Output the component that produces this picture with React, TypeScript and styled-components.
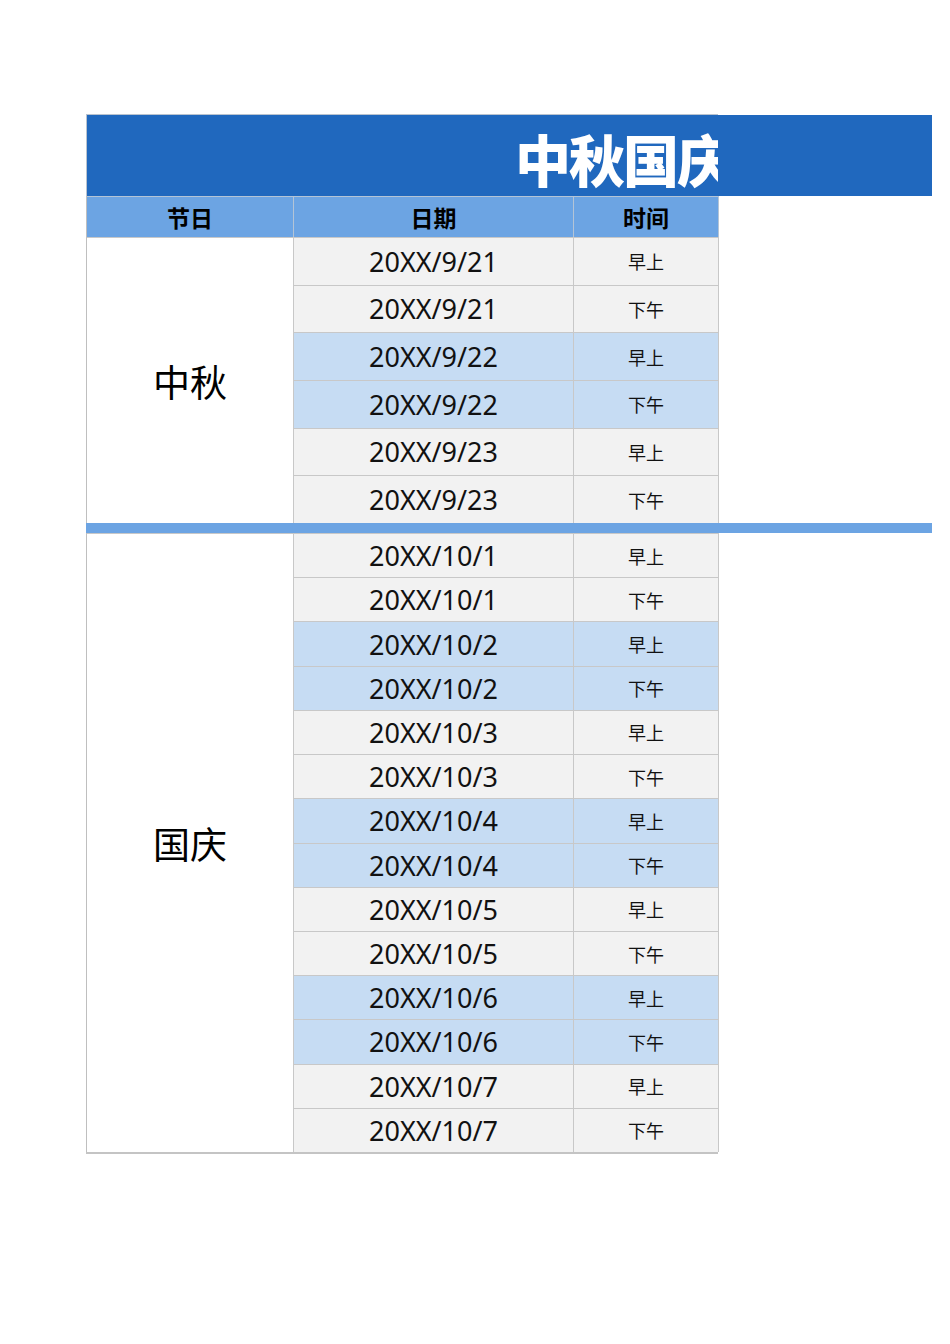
import React from "react";
import styled, { createGlobalStyle } from "styled-components";

const Global = createGlobalStyle`
  html, body { margin: 0; padding: 0; background: #fff; }
  body { font-family: "Noto Sans", "Noto Sans CJK SC", sans-serif; color: #000; }
`;

const Page = styled.div`
  padding: 114px 0 0 86px;
  width: 950px;
  box-sizing: border-box;
`;

const TitleRow = styled.div`
  display: flex;
  align-items: flex-start;
`;

const TitleCell = styled.div`
  width: 632px;
  height: 82px;
  box-sizing: border-box;
  border-top: 1px solid #b9c3cf;
  border-left: 1px solid #b9c3cf;
  background: #2068be;
  overflow: hidden;
  display: flex;
  align-items: center;
  padding-left: 428px;
  white-space: nowrap;
`;

const TitleText = styled.span`
  font-family: "Noto Sans CJK SC", sans-serif;
  font-weight: 900;
  font-size: 56px;
  color: #fff;
  letter-spacing: -2px;
  line-height: 1;
  margin-top: 4px;
`;

const TitleExtension = styled.div`
  width: 214px;
  height: 82px;
  background: #2068be;
  border-top: 1px solid #fff;
  box-sizing: border-box;
`;

const Columns = "207px 280px 145px";

const HeaderRow = styled.div`
  display: grid;
  grid-template-columns: ${Columns};
  width: 632px;
  height: 41px;
  background: #6ca4e3;
  box-sizing: border-box;
  border-left: 1px solid #bfbfbf;
`;

const HeaderCell = styled.div`
  display: flex;
  align-items: center;
  justify-content: center;
  font-family: "Noto Sans CJK SC", sans-serif;
  font-weight: 700;
  font-size: 23px;
  border-right: 1px solid #b4c4d6;
  border-top: 1px solid #b4c4d6;
`;

const Group = styled.div<{ $rows: number; $height: number }>`
  display: grid;
  grid-template-columns: ${Columns};
  grid-template-rows: repeat(${(p) => p.$rows}, 1fr);
  width: 632px;
  height: ${(p) => p.$height}px;
  box-sizing: border-box;
  border-left: 1px solid #bfbfbf;
`;

const GroupCell = styled.div<{ $rows: number }>`
  grid-column: 1;
  grid-row: 1 / span ${(p) => p.$rows};
  background: #fff;
  border-right: 1px solid #c8c8c8;
  border-top: 1px solid #c8c8c8;
  display: flex;
  align-items: center;
  justify-content: center;
  font-family: "Noto Sans CJK SC", sans-serif;
  font-size: 37px;
`;

const DataCell = styled.div<{ $blue: boolean; $small?: boolean }>`
  background: ${(p) => (p.$blue ? "#c6dcf3" : "#f2f2f2")};
  border-right: 1px solid #c8c8c8;
  border-top: 1px solid #c8c8c8;
  display: flex;
  align-items: center;
  justify-content: center;
  font-family: ${(p) =>
    p.$small ? `"Noto Sans CJK SC", sans-serif` : `"Noto Sans", "Noto Sans CJK SC", sans-serif`};
  font-size: ${(p) => (p.$small ? "18px" : "27px")};
  color: #111;
`;

const Separator = styled.div`
  width: 846px;
  height: 10px;
  background: #6ca4e3;
`;

const BottomEdge = styled.div`
  width: 632px;
  height: 2px;
  background: #c4c4c4;
`;

type Row = { date: string; time: string };

const build = (dates: string[]): Row[] =>
  dates.flatMap((d) => [
    { date: d, time: "早上" },
    { date: d, time: "下午" },
  ]);

const midAutumn = build(["20XX/9/21", "20XX/9/22", "20XX/9/23"]);
const national = build([
  "20XX/10/1",
  "20XX/10/2",
  "20XX/10/3",
  "20XX/10/4",
  "20XX/10/5",
  "20XX/10/6",
  "20XX/10/7",
]);

const HolidayGroup: React.FC<{ name: string; rows: Row[]; height: number }> = ({
  name,
  rows,
  height,
}) => (
  <Group $rows={rows.length} $height={height}>
    <GroupCell $rows={rows.length}>{name}</GroupCell>
    {rows.map((r, i) => {
      const blue = Math.floor(i / 2) % 2 === 1;
      return (
        <React.Fragment key={i}>
          <DataCell $blue={blue} style={{ gridRow: i + 1, gridColumn: 2 }}>
            {r.date}
          </DataCell>
          <DataCell $blue={blue} $small style={{ gridRow: i + 1, gridColumn: 3 }}>
            {r.time}
          </DataCell>
        </React.Fragment>
      );
    })}
  </Group>
);

export default function App() {
  return (
    <Page>
      <Global />
      <TitleRow>
        <TitleCell>
          <TitleText>中秋国庆假期值班表</TitleText>
        </TitleCell>
        <TitleExtension />
      </TitleRow>
      <HeaderRow>
        <HeaderCell>节日</HeaderCell>
        <HeaderCell>日期</HeaderCell>
        <HeaderCell>时间</HeaderCell>
      </HeaderRow>
      <HolidayGroup name="中秋" rows={midAutumn} height={286} />
      <Separator />
      <HolidayGroup name="国庆" rows={national} height={619} />
      <BottomEdge />
    </Page>
  );
}
